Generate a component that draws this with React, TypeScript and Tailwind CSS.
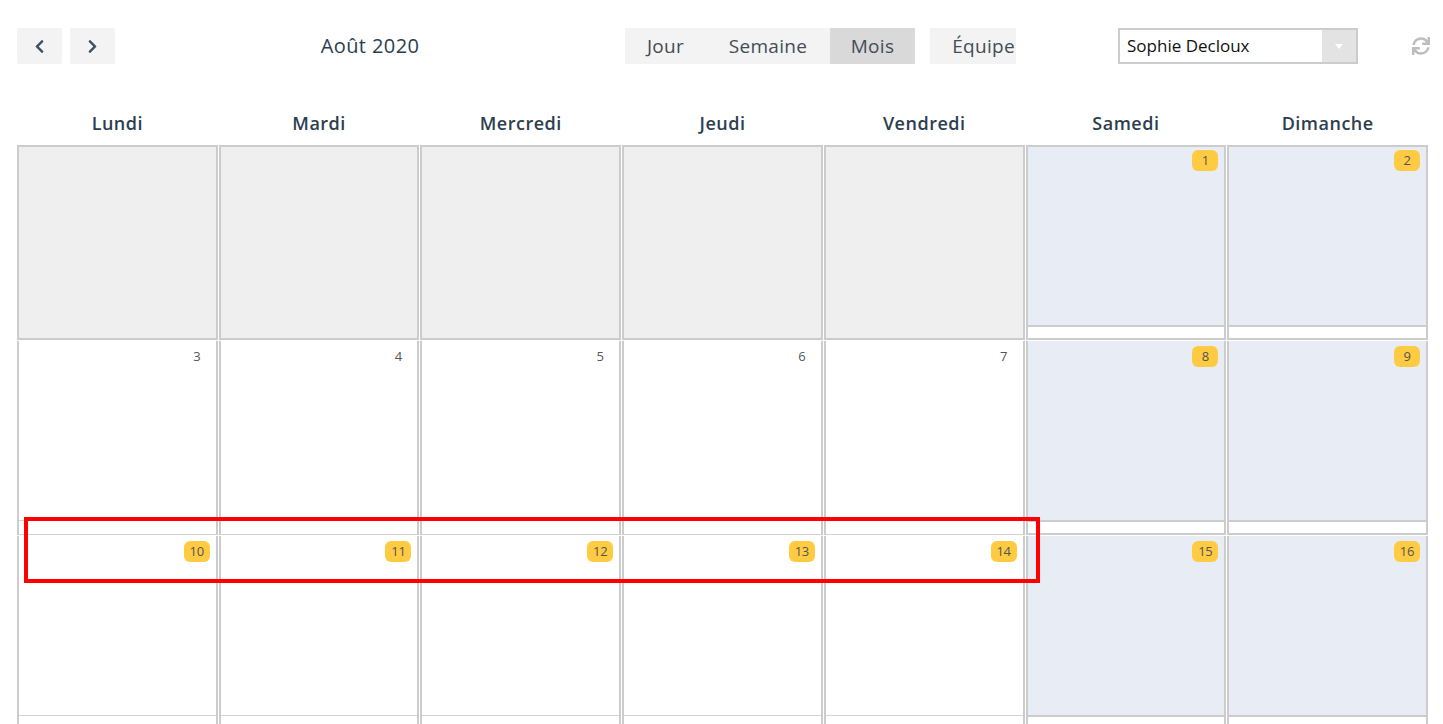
import React from "react";
import { FaChevronLeft, FaChevronRight, FaSync } from "react-icons/fa";

type Cell = { n?: number; kind: "out" | "day" | "weekend"; badge?: boolean };

const days = ["Lundi", "Mardi", "Mercredi", "Jeudi", "Vendredi", "Samedi", "Dimanche"];

const rows: Cell[][] = [
  [
    { kind: "out" },
    { kind: "out" },
    { kind: "out" },
    { kind: "out" },
    { kind: "out" },
    { n: 1, kind: "weekend", badge: true },
    { n: 2, kind: "weekend", badge: true },
  ],
  [
    { n: 3, kind: "day" },
    { n: 4, kind: "day" },
    { n: 5, kind: "day" },
    { n: 6, kind: "day" },
    { n: 7, kind: "day" },
    { n: 8, kind: "weekend", badge: true },
    { n: 9, kind: "weekend", badge: true },
  ],
  [
    { n: 10, kind: "day", badge: true },
    { n: 11, kind: "day", badge: true },
    { n: 12, kind: "day", badge: true },
    { n: 13, kind: "day", badge: true },
    { n: 14, kind: "day", badge: true },
    { n: 15, kind: "weekend", badge: true },
    { n: 16, kind: "weekend", badge: true },
  ],
  [
    { kind: "day" },
    { kind: "day" },
    { kind: "day" },
    { kind: "day" },
    { kind: "day" },
    { kind: "weekend" },
    { kind: "weekend" },
  ],
];

function Num({ c, first }: { c: Cell; first: boolean }) {
  if (c.n === undefined) return null;
  return (
    <div className={"flex justify-end pr-[6px] " + (first ? "pt-[3px]" : "pt-[5px]")}>
      <span
        className={
          "h-[21px] min-w-[26px] px-[5px] rounded-[6px] text-[13px] leading-[21px] text-center text-[#555] tracking-[-0.3px] " +
          (c.badge ? "bg-[#fecb42]" : "bg-transparent")
        }
      >
        {c.n}
      </span>
    </div>
  );
}

function DayCell({ c, first }: { c: Cell; first: boolean }) {
  if (c.kind === "out") {
    return <div className="h-[195px] border-2 border-[#cccccc] bg-[#efefef]" />;
  }
  const weekend = c.kind === "weekend";
  return (
    <div
      className={
        "flex flex-col border-x-2 border-[#cccccc] " +
        (first ? "h-[195px] border-t-2 " : "h-[194px] ")
      }
    >
      <div className={"flex-1 " + (weekend ? "bg-[#e8edf5]" : "bg-white")}>
        <Num c={c} first={first} />
      </div>
      <div
        className={
          "h-[15px] bg-white border-[#cccccc] " +
          (weekend ? "border-y-2" : "border-y border-[#d2d2d2]")
        }
      />
    </div>
  );
}

export default function App() {
  return (
    <div
      className="relative w-[1443px] h-[724px] overflow-hidden bg-white text-[#2c3e50]"
      style={{ fontFamily: '"Open Sans", "Liberation Sans", sans-serif' }}
    >
      {/* Toolbar */}
      <div className="flex items-center h-[36px] mt-[28px] pl-[17px]">
        <button className="w-[45px] h-[36px] bg-[#f3f3f3] rounded-[2px] flex items-center justify-center text-[#3d4f63]">
          <FaChevronLeft size={15} />
        </button>
        <button className="ml-[8px] w-[45px] h-[36px] bg-[#f3f3f3] rounded-[2px] flex items-center justify-center text-[#3d4f63]">
          <FaChevronRight size={15} />
        </button>
        <div className="w-[510px] text-center text-[20px] tracking-[0.4px] text-[#2c3e50]">Août 2020</div>
        <div className="flex h-[36px] text-[19px] tracking-[0.3px] text-[#444c55]">
          <div className="w-[81px] bg-[#f3f3f3] flex items-center justify-center">Jour</div>
          <div className="w-[124px] bg-[#f3f3f3] flex items-center justify-center">Semaine</div>
          <div className="w-[85px] bg-[#d9d9d9] flex items-center justify-center">Mois</div>
        </div>
        <div className="ml-[15px] w-[86px] h-[36px] bg-[#f3f3f3] flex items-center justify-end pr-[1px] text-[19px] tracking-[0.3px] text-[#444c55]">
          Équipe
        </div>
        <div className="ml-[102px] w-[240px] h-[36px] border-2 border-[#cccccc] flex items-stretch">
          <div className="flex-1 flex items-center pl-[7px] text-[17px] text-[#111]">Sophie Decloux</div>
          <div className="w-[34px] bg-[#e3e3e3] flex items-center justify-center">
            <svg width="8" height="5" viewBox="0 0 8 5">
              <path d="M0 0 L8 0 L4 5 Z" fill="#ffffff" />
            </svg>
          </div>
        </div>
        <div className="ml-[54px] text-[#bdbdbd]">
          <FaSync size={18} />
        </div>
      </div>

      {/* Day headers */}
      <div className="grid grid-cols-7 gap-x-[1px] ml-[17px] w-[1411px] mt-[45px]">
        {days.map((d) => (
          <div
            key={d}
            className="text-center text-[18px] font-semibold tracking-[0.5px] leading-[28px] text-[#2c3e50]"
          >
            {d}
          </div>
        ))}
      </div>

      {/* Grid */}
      <div className="grid grid-cols-7 gap-[1px] ml-[17px] w-[1411px] mt-[8px]">
        {rows.map((r, ri) =>
          r.map((c, ci) => <DayCell key={ri + "-" + ci} c={c} first={ri === 0} />)
        )}
      </div>

      {/* Annotation box */}
      <div className="absolute left-[24px] top-[517px] w-[1016px] h-[66px] border-4 border-[#ff0000] pointer-events-none" />
    </div>
  );
}
